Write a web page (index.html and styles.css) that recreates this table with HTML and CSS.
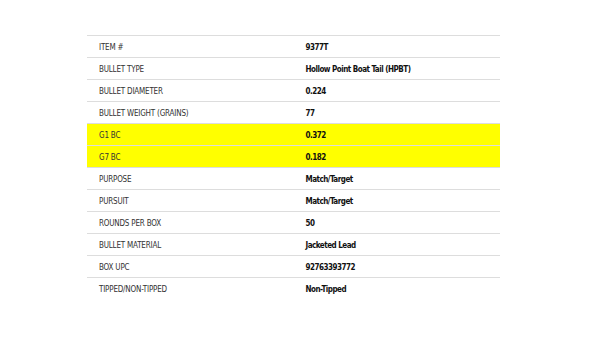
FILE: index.html
```html
<!DOCTYPE html>
<html>
<head>
<meta charset="utf-8">
<link rel="stylesheet" href="styles.css">
</head>
<body>
<table class="specs">
  <tbody>
    <tr><td class="label">ITEM #</td><td class="value">9377T</td></tr>
    <tr><td class="label">BULLET TYPE</td><td class="value">Hollow Point Boat Tail (HPBT)</td></tr>
    <tr><td class="label">BULLET DIAMETER</td><td class="value">0.224</td></tr>
    <tr><td class="label">BULLET WEIGHT (GRAINS)</td><td class="value">77</td></tr>
    <tr class="hl"><td class="label">G1 BC</td><td class="value">0.372</td></tr>
    <tr class="hl"><td class="label">G7 BC</td><td class="value">0.182</td></tr>
    <tr><td class="label">PURPOSE</td><td class="value">Match/Target</td></tr>
    <tr><td class="label">PURSUIT</td><td class="value">Match/Target</td></tr>
    <tr><td class="label">ROUNDS PER BOX</td><td class="value">50</td></tr>
    <tr><td class="label">BULLET MATERIAL</td><td class="value">Jacketed Lead</td></tr>
    <tr><td class="label">BOX UPC</td><td class="value">92763393772</td></tr>
    <tr class="last"><td class="label">TIPPED/NON-TIPPED</td><td class="value">Non-Tipped</td></tr>
  </tbody>
</table>
</body>
</html>
```
FILE: styles.css
```css
html, body {
  margin: 0;
  padding: 0;
  background: #ffffff;
}
body {
  padding: 35px 0 0 87px;
  font-family: "Liberation Sans Narrow", "DejaVu Sans Condensed", "Liberation Sans", sans-serif;
}
.specs {
  width: 413px;
  border-collapse: collapse;
  table-layout: fixed;
}
.specs td {
  box-sizing: border-box;
  height: 22px;
  padding: 2px 0 0 12px;
  border-top: 1px solid #dddddd;
  font-size: 8px;
  line-height: 19px;
  vertical-align: middle;
  white-space: nowrap;
}
.specs .label {
  color: #333333;
  letter-spacing: -0.2px;
}
.specs .value {
  color: #111111;
  font-weight: bold;
  letter-spacing: -0.5px;
}
.specs .hl td {
  background: #ffff00;
}
```
